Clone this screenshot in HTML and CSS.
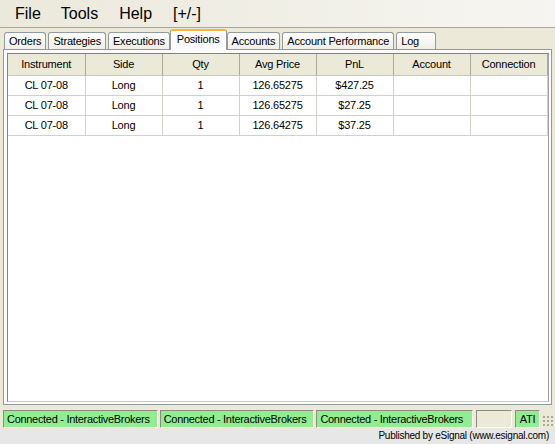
FILE: index.html
```html
<!DOCTYPE html>
<html lang="en">
<head>
<meta charset="UTF-8">
<title>Positions</title>
<link rel="stylesheet" href="styles.css">
</head>
<body>

<div class="menubar">
  <span class="menu-item">File</span>
  <span class="menu-item">Tools</span>
  <span class="menu-item">Help</span>
  <span class="menu-item">[+/-]</span>
</div>

<div class="tabs">
  <div class="tab">Orders</div>
  <div class="tab">Strategies</div>
  <div class="tab">Executions</div>
  <div class="tab active">Positions</div>
  <div class="tab">Accounts</div>
  <div class="tab">Account Performance</div>
  <div class="tab log">Log</div>
</div>

<div class="panel">
  <div class="grid">
    <table>
      <thead>
        <tr>
          <th>Instrument</th>
          <th>Side</th>
          <th>Qty</th>
          <th>Avg Price</th>
          <th>PnL</th>
          <th>Account</th>
          <th>Connection</th>
        </tr>
      </thead>
      <tbody>
        <tr><td>CL 07-08</td><td>Long</td><td>1</td><td>126.65275</td><td>$427.25</td><td></td><td></td></tr>
        <tr><td>CL 07-08</td><td>Long</td><td>1</td><td>126.65275</td><td>$27.25</td><td></td><td></td></tr>
        <tr><td>CL 07-08</td><td>Long</td><td>1</td><td>126.64275</td><td>$37.25</td><td></td><td></td></tr>
      </tbody>
    </table>
  </div>
</div>

<div class="statusbar">
  <div class="status green wide">Connected - InteractiveBrokers</div>
  <div class="status green wide">Connected - InteractiveBrokers</div>
  <div class="status green wide last">Connected - InteractiveBrokers</div>
  <div class="status empty"></div>
  <div class="status green ati">ATI</div>
  <div class="grip"></div>
</div>

<div class="footer">Published by eSignal (www.esignal.com)</div>

</body>
</html>
```

FILE: styles.css
```css
  body {
    margin: 0;
    width: 555px;
    height: 444px;
    display: flex;
    flex-direction: column;
    background-color: #ece9d8;
    font-family: "Liberation Sans", Arial, sans-serif;
    font-size: 11px;
    color: #000;
    overflow: hidden;
  }
  .menubar {
    height: 27px;
    border-bottom: 1px solid #a9a796;
    background: linear-gradient(to right, #ebe9db, #f6f5f1);
    display: flex;
    align-items: center;
    font-size: 16px;
    padding-left: 15px;
  }
  .menu-item {
    margin-right: 21px;
  }
  .menu-item:nth-child(1) {
    margin-right: 20px;
  }
  .tabs {
    height: 21px;
    display: flex;
    align-items: flex-end;
    padding-left: 4px;
    gap: 2px;
    letter-spacing: -0.2px;
  }
  .tab {
    height: 17px;
    line-height: 17px;
    padding: 0 4px;
    border: 1px solid #919b9c;
    border-bottom: none;
    border-radius: 3px 3px 0 0;
    background: linear-gradient(#fefefe, #f1efe6);
    box-sizing: border-box;
    white-space: nowrap;
  }
  .tab.active {
    height: 21px;
    line-height: 17px;
    padding: 0 6px;
    margin: 0 -2px 0 -2px;
    background: #fcfcfe;
    border-top: 2px solid #f4b541;
    position: relative;
    top: 1px;
  }
  .tab.log {
    width: 40px;
  }
  .panel {
    flex: 1;
    margin: 0 3px 0 3px;
    border: 1px solid #919b9c;
    background-color: #fcfcfe;
    padding: 3px 3px 2px 3px;
    display: flex;
  }
  .grid {
    flex: 1;
    border: 1px solid #828282;
    border-right-color: #a0a0a0;
    border-bottom-color: #c8c8c8;
    background-color: #fff;
  }
  table {
    border-collapse: collapse;
    table-layout: fixed;
    width: 539px;
    letter-spacing: -0.2px;
  }
  th, td {
    width: 77px;
    height: 20px;
    padding: 0;
    text-align: center;
    font-weight: normal;
    box-sizing: border-box;
  }
  th {
    height: 21px;
    background-color: #ebe9d8;
    border-right: 1px solid #aca899;
    border-left: 1px solid #fff;
    border-bottom: 1px solid #cbc7b8;
  }
  th:first-child {
    border-left: none;
  }
  td {
    border-right: 1px solid #d4d0c8;
    border-bottom: 1px solid #d4d0c8;
  }
  .statusbar {
    height: 24px;
    display: flex;
    align-items: flex-end;
    padding: 0 1px 1px 3px;
    box-sizing: border-box;
    gap: 2px;
  }
  .status {
    height: 18px;
    line-height: 17px;
    box-sizing: border-box;
    border: 1px solid;
    border-color: #8d8b80 #fff #fff #8d8b80;
    padding: 0 3px;
    letter-spacing: -0.3px;
    font-size: 11px;
    white-space: nowrap;
    overflow: hidden;
  }
  .green {
    background-color: #90ee90;
  }
  .wide {
    width: 155px;
  }
  .wide.last {
    width: 157px;
  }
  .empty {
    width: 36px;
    margin-left: 1px;
  }
  .ati {
    width: 25px;
    padding: 0;
    text-align: center;
    margin-left: 1px;
  }
  .grip {
    width: 12px;
    height: 12px;
    margin-bottom: 1px;
    background-image: radial-gradient(circle, #aca899 1px, transparent 1.2px);
    background-size: 4px 4px;
  }
  .footer {
    height: 15px;
    line-height: 14px;
    background-color: #e7e7e7;
    text-align: right;
    padding-right: 6px;
    font-size: 10px;
    letter-spacing: -0.25px;
    white-space: nowrap;
  }
```
